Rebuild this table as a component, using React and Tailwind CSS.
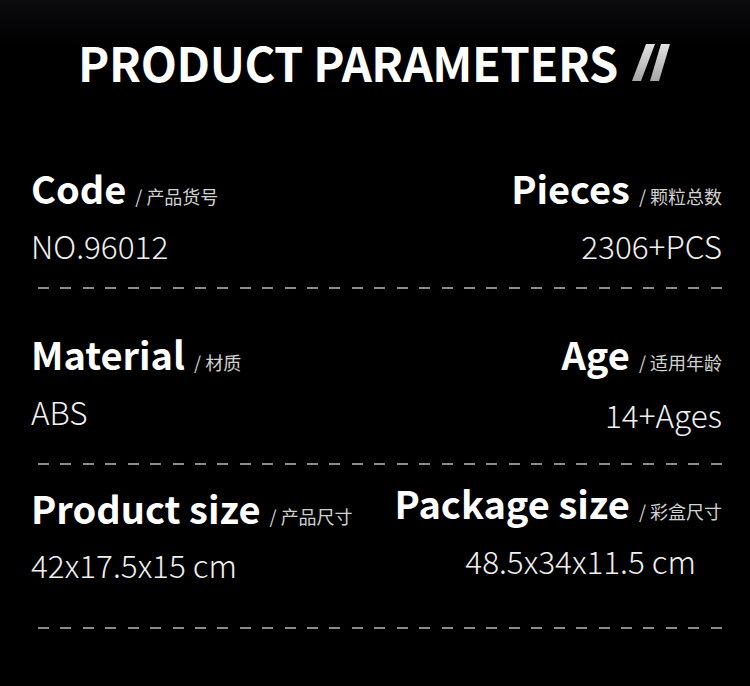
import React from 'react';

const FONT = "font-['Noto_Sans_CJK_SC','Noto_Sans',sans-serif]";

function Dashes({ className = '' }) {
  // dashed divider drawn as a row of short bars
  return (
    <div className={`flex justify-between ml-[7px] w-[684px] ${className}`}>
      {Array.from({ length: 31 }).map((_, i) => (
        <span key={i} className="block w-[11px] h-[2px] bg-[#8c8c8c]" />
      ))}
    </div>
  );
}

function Heading({ title, sub, className = '' }) {
  return (
    <div className={`flex items-baseline leading-none whitespace-nowrap ${className}`}>
      <span className="text-[38px] font-bold text-white">{title}</span>
      <span className="ml-[9px] text-[18px] text-[#d2d2d2]">/ {sub}</span>
    </div>
  );
}

function Value({ children, className = '' }) {
  return <div className={`text-[31.5px] font-light leading-none text-[#f0f0f0] whitespace-nowrap ${className}`}>{children}</div>;
}

export default function App() {
  return (
    <div className={`w-[750px] h-[686px] overflow-hidden bg-black bg-[linear-gradient(to_bottom,#0b0b0e_0px,#000_45px)] ${FONT}`}>
      {/* Title */}
      <div className="pt-[38px] flex justify-center items-center">
        <h1 className="text-[47px] font-bold leading-none text-white tracking-[-0.4px]">PRODUCT PARAMETERS</h1>
        <svg width="44" height="37" viewBox="0 0 44 37" className="ml-[10px] mt-[2px]">
          <defs>
            <linearGradient id="sl" x1="0" y1="0" x2="0" y2="1">
              <stop offset="0" stopColor="#e2e2e2" />
              <stop offset="1" stopColor="#a6a6a6" />
            </linearGradient>
          </defs>
          <polygon points="4,37 13,37 27,0 18,0" fill="url(#sl)" />
          <polygon points="22,37 31,37 42,0 33,0" fill="url(#sl)" />
        </svg>
      </div>

      <div className="pl-[31px] pr-[28px]">
        {/* Row 1 */}
        <div className="mt-[84px] flex justify-between items-start">
          <div>
            <Heading title="Code" sub="产品货号" />
            <Value className="mt-[23px]">NO.96012</Value>
          </div>
          <div className="flex flex-col items-end">
            <Heading title="Pieces" sub="颗粒总数" />
            <Value className="mt-[23px]">2306+PCS</Value>
          </div>
        </div>
        <Dashes className="mt-[25px]" />

        {/* Row 2 */}
        <div className="mt-[46px] flex justify-between items-start">
          <div>
            <Heading title="Material" sub="材质" />
            <Value className="mt-[23px]">ABS</Value>
          </div>
          <div className="flex flex-col items-end">
            <Heading title="Age" sub="适用年龄" />
            <Value className="mt-[26px]">14+Ages</Value>
          </div>
        </div>
        <Dashes className="mt-[33px]" />

        {/* Row 3 */}
        <div className="mt-[19px] flex justify-between items-start">
          <div className="mt-[5px]">
            <Heading title="Product size" sub="产品尺寸" />
            <Value className="mt-[22px]">42x17.5x15 cm</Value>
          </div>
          <div>
            <Heading title="Package size" sub="彩盒尺寸" />
            <Value className="mt-[23px] text-right pr-[26px]">48.5x34x11.5 cm</Value>
          </div>
        </div>
        <Dashes className="mt-[46px]" />
      </div>
    </div>
  );
}
